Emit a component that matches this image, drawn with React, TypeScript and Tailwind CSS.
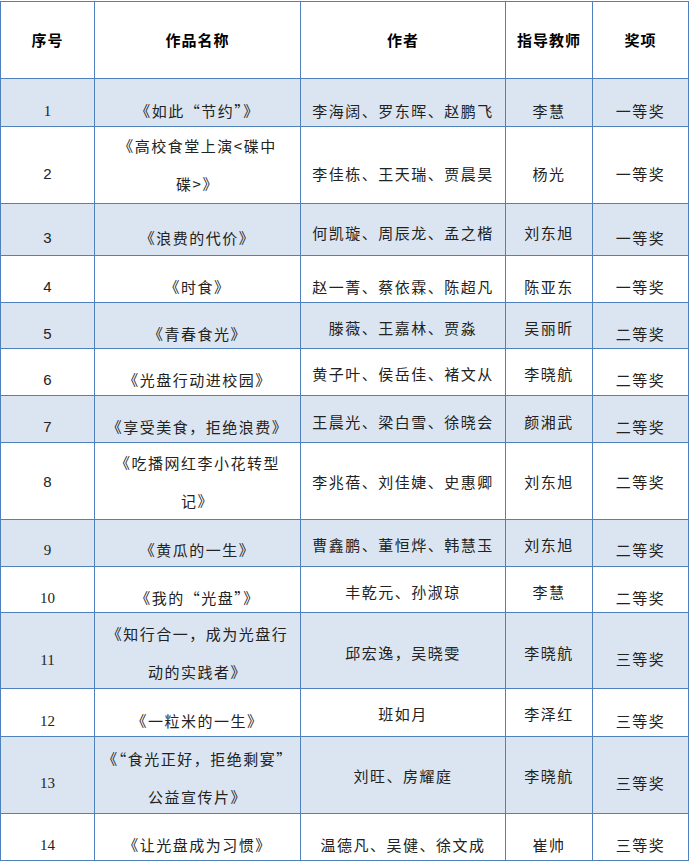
import React from "react";

type Row = {
  no: string;
  serifNo: boolean;
  title: string[];
  authors: string;
  teacher: string;
  award: string;
  h: string;
  blue: boolean;
  // padding-top per column: no, title, authors, teacher, award
  pt: [string, string, string, string, string];
};

const rows: Row[] = [
  { no: "1", serifNo: true, title: ["《如此“节约”》"], authors: "李海阔、罗东晖、赵鹏飞", teacher: "李慧", award: "一等奖", h: "h-[48px]", blue: true, pt: ["pt-[13px]", "pt-[13px]", "pt-[13px]", "pt-[13px]", "pt-[13px]"] },
  { no: "2", serifNo: false, title: ["《高校食堂上演<碟中", "碟>》"], authors: "李佳栋、王天瑞、贾晨昊", teacher: "杨光", award: "一等奖", h: "h-[77px]", blue: false, pt: ["pt-[28px]", "pt-0", "pt-[28px]", "pt-[28px]", "pt-[28px]"] },
  { no: "3", serifNo: false, title: ["《浪费的代价》"], authors: "何凯璇、周辰龙、孟之楷", teacher: "刘东旭", award: "一等奖", h: "h-[52px]", blue: true, pt: ["pt-[15px]", "pt-[15px]", "pt-[10px]", "pt-[10px]", "pt-[15px]"] },
  { no: "4", serifNo: false, title: ["《时食》"], authors: "赵一菁、蔡依霖、陈超凡", teacher: "陈亚东", award: "一等奖", h: "h-[47px]", blue: false, pt: ["pt-[12px]", "pt-[12px]", "pt-[12px]", "pt-[12px]", "pt-[12px]"] },
  { no: "5", serifNo: false, title: ["《青春食光》"], authors: "滕薇、王嘉林、贾淼", teacher: "吴丽昕", award: "二等奖", h: "h-[46px]", blue: true, pt: ["pt-[12px]", "pt-[12px]", "pt-[6px]", "pt-[6px]", "pt-[12px]"] },
  { no: "6", serifNo: false, title: ["《光盘行动进校园》"], authors: "黄子叶、侯岳佳、褚文从", teacher: "李晓航", award: "二等奖", h: "h-[47px]", blue: false, pt: ["pt-[12px]", "pt-[12px]", "pt-[6px]", "pt-[6px]", "pt-[12px]"] },
  { no: "7", serifNo: false, title: ["《享受美食，拒绝浪费》"], authors: "王晨光、梁白雪、徐晓会", teacher: "颜湘武", award: "二等奖", h: "h-[47px]", blue: true, pt: ["pt-[12px]", "pt-[12px]", "pt-[7px]", "pt-[7px]", "pt-[12px]"] },
  { no: "8", serifNo: false, title: ["《吃播网红李小花转型", "记》"], authors: "李兆蓓、刘佳婕、史惠卿", teacher: "刘东旭", award: "二等奖", h: "h-[77px]", blue: false, pt: ["pt-[20px]", "pt-px", "pt-[20px]", "pt-[20px]", "pt-[20px]"] },
  { no: "9", serifNo: true, title: ["《黄瓜的一生》"], authors: "曹鑫鹏、董恒烨、韩慧玉", teacher: "刘东旭", award: "二等奖", h: "h-[47px]", blue: true, pt: ["pt-[11px]", "pt-[11px]", "pt-[6px]", "pt-[6px]", "pt-[11px]"] },
  { no: "10", serifNo: true, title: ["《我的“光盘”》"], authors: "丰乾元、孙淑琼", teacher: "李慧", award: "二等奖", h: "h-[46px]", blue: false, pt: ["pt-[12px]", "pt-[12px]", "pt-[6px]", "pt-[6px]", "pt-[12px]"] },
  { no: "11", serifNo: true, title: ["《知行合一，成为光盘行", "动的实践者》"], authors: "邱宏逸，吴晓雯", teacher: "李晓航", award: "三等奖", h: "h-[76px]", blue: true, pt: ["pt-[28px]", "pt-[2px]", "pt-[21px]", "pt-[21px]", "pt-[27px]"] },
  { no: "12", serifNo: true, title: ["《一粒米的一生》"], authors: "班如月", teacher: "李泽红", award: "三等奖", h: "h-[48px]", blue: false, pt: ["pt-[13px]", "pt-[13px]", "pt-[6px]", "pt-[6px]", "pt-[13px]"] },
  { no: "13", serifNo: true, title: ["《“食光正好，拒绝剩宴”", "公益宣传片》"], authors: "刘旺、房耀庭", teacher: "李晓航", award: "三等奖", h: "h-[77px]", blue: true, pt: ["pt-[27px]", "pt-[3px]", "pt-[20px]", "pt-[20px]", "pt-[27px]"] },
  { no: "14", serifNo: true, title: ["《让光盘成为习惯》"], authors: "温德凡、吴健、徐文成", teacher: "崔帅", award: "三等奖", h: "h-[47px]", blue: false, pt: ["pt-[12px]", "pt-[12px]", "pt-[12px]", "pt-[12px]", "pt-[12px]"] },
];

const grid = "grid grid-cols-[94px_206px_205px_87px_96px] border-b border-[#4f81bd]";
const cell = "border-r border-[#4f81bd] text-center";
const cjk = "font-['Noto_Sans_CJK_SC',sans-serif] text-[15px] leading-[38px] tracking-[1.5px] text-[#222]";

export default function App() {
  return (
    <div className="w-[689px] bg-white pt-px">
      <div className="border-t border-l border-[#4f81bd]">
        <div className={`${grid} h-[77px] font-['Noto_Sans_CJK_SC',sans-serif] text-[15px] font-bold tracking-[1px] text-black`}>
          {["序号", "作品名称", "作者", "指导教师", "奖项"].map((t) => (
            <div key={t} className={`${cell} flex items-center justify-center`}>
              {t}
            </div>
          ))}
        </div>

        {rows.map((r) => (
          <div key={r.no} className={`${grid} ${r.h} ${r.blue ? "bg-[#dbe5f1]" : "bg-white"}`}>
            <div
              className={`${cell} ${r.pt[0]} text-[15px] leading-[38px] text-[#222] ${
                r.serifNo ? "font-['Liberation_Serif',serif]" : "font-['Liberation_Sans',sans-serif]"
              }`}
            >
              {r.no}
            </div>
            <div className={`${cell} ${r.pt[1]} ${cjk}`}>
              {r.title.map((line, i) => (
                <div key={i}>{line}</div>
              ))}
            </div>
            <div className={`${cell} ${r.pt[2]} ${cjk}`}>{r.authors}</div>
            <div className={`${cell} ${r.pt[3]} ${cjk}`}>{r.teacher}</div>
            <div className={`${cell} ${r.pt[4]} ${cjk}`}>{r.award}</div>
          </div>
        ))}
      </div>
    </div>
  );
}
